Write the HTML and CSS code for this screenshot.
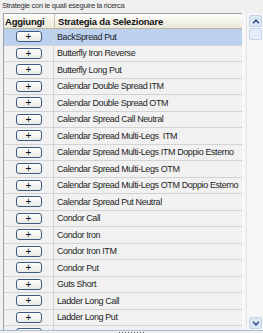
FILE: index.html
```html
<!DOCTYPE html>
<html>
<head>
    <title>Strategie</title>
    <link rel="stylesheet" href="styles.css">
</head>
<body>
    <div class="caption">Strategie con le quali eseguire la ricerca</div>

    <div class="panel">
        <div class="grid">
            <div class="row head">
                <div class="col-add">Aggiungi</div>
                <div class="col-name">Strategia da Selezionare</div>
            </div>
            <div class="row selected"><div class="col-add"><span class="btn">+</span></div><div class="col-name">BackSpread Put</div></div>
            <div class="row"><div class="col-add"><span class="btn">+</span></div><div class="col-name">Butterfly Iron Reverse</div></div>
            <div class="row"><div class="col-add"><span class="btn">+</span></div><div class="col-name">Butterfly Long Put</div></div>
            <div class="row"><div class="col-add"><span class="btn">+</span></div><div class="col-name">Calendar Double Spread ITM</div></div>
            <div class="row"><div class="col-add"><span class="btn">+</span></div><div class="col-name">Calendar Double Spread OTM</div></div>
            <div class="row"><div class="col-add"><span class="btn">+</span></div><div class="col-name">Calendar Spread Call Neutral</div></div>
            <div class="row"><div class="col-add"><span class="btn">+</span></div><div class="col-name">Calendar Spread Multi-Legs&nbsp; ITM</div></div>
            <div class="row"><div class="col-add"><span class="btn">+</span></div><div class="col-name">Calendar Spread Multi-Legs ITM Doppio Esterno</div></div>
            <div class="row"><div class="col-add"><span class="btn">+</span></div><div class="col-name">Calendar Spread Multi-Legs OTM</div></div>
            <div class="row"><div class="col-add"><span class="btn">+</span></div><div class="col-name">Calendar Spread Multi-Legs OTM Doppio Esterno</div></div>
            <div class="row"><div class="col-add"><span class="btn">+</span></div><div class="col-name">Calendar Spread Put Neutral</div></div>
            <div class="row"><div class="col-add"><span class="btn">+</span></div><div class="col-name">Condor Call</div></div>
            <div class="row"><div class="col-add"><span class="btn">+</span></div><div class="col-name">Condor Iron</div></div>
            <div class="row"><div class="col-add"><span class="btn">+</span></div><div class="col-name">Condor Iron ITM</div></div>
            <div class="row"><div class="col-add"><span class="btn">+</span></div><div class="col-name">Condor Put</div></div>
            <div class="row"><div class="col-add"><span class="btn">+</span></div><div class="col-name">Guts Short</div></div>
            <div class="row"><div class="col-add"><span class="btn">+</span></div><div class="col-name">Ladder Long Call</div></div>
            <div class="row"><div class="col-add"><span class="btn">+</span></div><div class="col-name">Ladder Long Put</div></div>
            <div class="row"><div class="col-add"><span class="btn"></span></div><div class="col-name"></div></div>
        </div>

        <div class="scrollbar">
            <div class="sb-rail">
                <div class="sb-btn">
                    <svg width="8" height="5" viewBox="0 0 8 5"><path d="M1 4.2 L4 1.2 L7 4.2" fill="none" stroke="#2f4f86" stroke-width="1.6"/></svg>
                </div>
                <div class="sb-thumb"></div>
                <div class="sb-track"></div>
                <div class="sb-btn">
                    <svg width="8" height="5" viewBox="0 0 8 5"><path d="M1 0.8 L4 3.8 L7 0.8" fill="none" stroke="#2f4f86" stroke-width="1.6"/></svg>
                </div>
            </div>
        </div>
    </div>

    <div class="splitter"><span class="grip"></span></div>
</body>
</html>
```

FILE: styles.css
```css
body {
    margin: 0;
    width: 263px;
    height: 333px;
    overflow: hidden;
    background: #f0f0f0;
    font-family: 'Liberation Sans', Arial, sans-serif;
    font-size: 9px;
    letter-spacing: -0.4px;
    color: #1e1e1e;
}

.caption {
    height: 13px;
    line-height: 12px;
    padding-left: 2px;
    font-size: 7.6px;
    letter-spacing: -0.3px;
    color: #333;
}

.panel {
    display: flex;
    height: 317px;
    padding-left: 3px;
    overflow: hidden;
}

.grid {
    width: 238px;
    flex: none;
    border-left: 1px solid #9aa4b0;
    border-top: 1px solid #9aa4b0;
    background: #f1f1f1;
    overflow: hidden;
}

.row {
    display: flex;
    height: 16.5px;
    border-bottom: 1px solid #d3d3d3;
    box-sizing: border-box;
}

.row.head {
    height: 15px;
    font-weight: bold;
    font-size: 9.5px;
    letter-spacing: -0.2px;
    color: #111;
    background: linear-gradient(#fdfdfb, #ebe8da);
    border-bottom: 1px solid #b8b49f;
}

.row.selected {
    background: #bcd1ee;
}

.col-add {
    width: 49px;
    flex: none;
    border-right: 1px solid #d3d3d3;
    display: flex;
    align-items: center;
    justify-content: center;
}

.head .col-add {
    justify-content: flex-start;
    padding-left: 1px;
    border-right-color: #c8c4b0;
}

.col-name {
    flex: 1;
    padding-left: 3px;
    display: flex;
    align-items: center;
    white-space: nowrap;
    overflow: hidden;
}

.btn {
    width: 24px;
    height: 9px;
    border: 1px solid #3c5a80;
    border-radius: 3px;
    background: linear-gradient(#ffffff, #eceae4);
    display: flex;
    align-items: center;
    justify-content: center;
    font-size: 10px;
    letter-spacing: 0;
    line-height: 9px;
    color: #111;
}

.scrollbar {
    flex: 1;
    background: #f7f7f7;
    padding-left: 4px;
}

.sb-rail {
    height: 100%;
    border-left: 1px solid #e4e4e4;
    display: flex;
    flex-direction: column;
    padding: 2px 1px 1px 2px;
    box-sizing: border-box;
}

.sb-btn {
    height: 10px;
    background: #dde7f6;
    border: 1px solid #c4d3ea;
    border-radius: 2px;
    display: flex;
    align-items: center;
    justify-content: center;
}

.sb-thumb {
    height: 10px;
    margin-top: 1px;
    background: #e6edf8;
    border: 1px solid #c4d3ea;
    border-radius: 2px;
}

.sb-track {
    flex: 1;
}

.splitter {
    height: 3px;
    border-top: 1px solid #a9bbd4;
    display: flex;
    justify-content: center;
}

.grip {
    width: 26px;
    height: 2px;
    margin-top: 1px;
    background: repeating-linear-gradient(90deg, #555 0 1px, transparent 1px 3px);
}
```
